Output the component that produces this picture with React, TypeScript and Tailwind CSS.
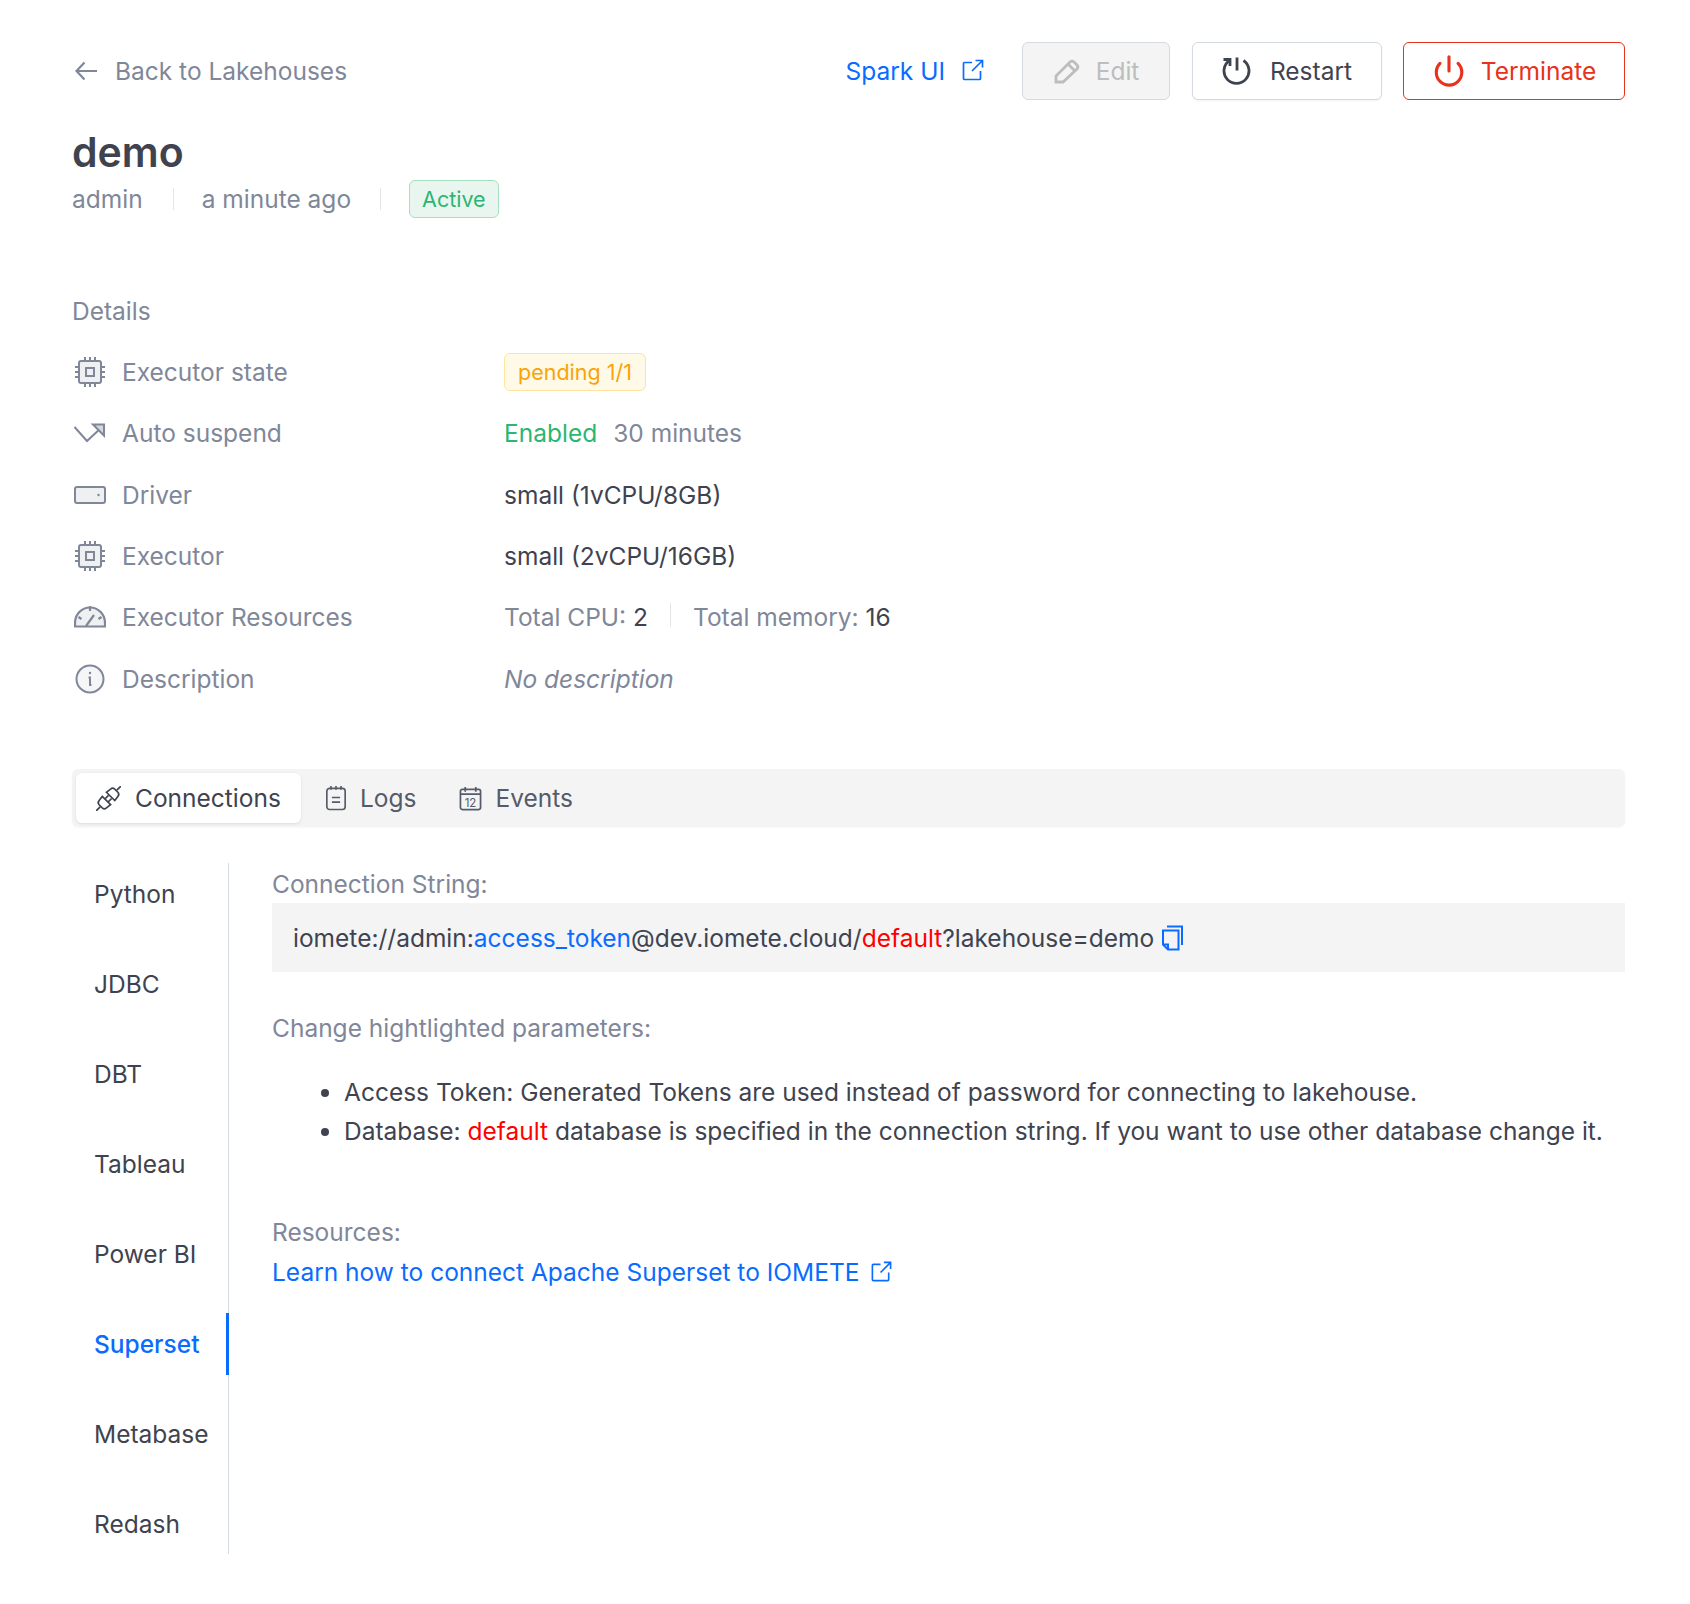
import type { ReactNode } from "react";
import { Power } from "lucide-react";

function BackArrow() {
  return (
    <svg viewBox="0 0 22 20" fill="none" stroke="currentColor" strokeWidth="2.200" className="w-[22px] h-5 ml-[3px] mr-[18px]">
      <path d="M1.500 10H22M9.500 1.500 1.500 10l8 8.500" />
    </svg>
  );
}

function ExternalIcon({ className }: { className?: string }) {
  return (
    <svg viewBox="0 0 24 24" fill="none" stroke="currentColor" strokeWidth="1.700" className={className}>
      <path d="M11 4.500H3.500a1 1 0 0 0-1 1v15a1 1 0 0 0 1 1h15a1 1 0 0 0 1-1V13" />
      <path d="M11 13 21.500 2.500M14.500 2.500h7v7" />
    </svg>
  );
}

function ChipIcon() {
  return (
    <svg viewBox="0 0 32 32" fill="none" stroke="#7f8799" strokeWidth="2" className="w-8 h-8">
      <rect x="5" y="5" width="22" height="22" rx="2" fill="#eef0f2" />
      <rect x="12" y="12" width="8" height="8" />
      <path d="M11 1v4M16 1v4M21 1v4M11 27v4M16 27v4M21 27v4M1 11h4M1 16h4M1 21h4M27 11h4M27 16h4M27 21h4" />
    </svg>
  );
}

function SuspendIcon() {
  return (
    <svg viewBox="0 0 32 20" fill="none" stroke="#7f8799" strokeWidth="2" className="w-8 h-5">
      <path d="M0.500 4 13 18 28 4" />
      <path d="M19 1.500h11v11Z" fill="#d5d8de" />
    </svg>
  );
}

function DriverIcon() {
  return (
    <svg viewBox="0 0 32 18" fill="none" stroke="#7f8799" strokeWidth="2" className="w-8 h-[18px]">
      <rect x="1" y="1" width="30" height="16" rx="2" fill="#eef0f2" />
      <circle cx="24.500" cy="9" r="1.200" fill="#7f8799" stroke="none" />
    </svg>
  );
}

function GaugeIcon() {
  return (
    <svg viewBox="0 0 32 22" fill="none" stroke="#7f8799" strokeWidth="2.200" className="w-8 h-[22px]">
      <path d="M1 20.500v-3.500C1 8.500 7.500 1.500 16 1.500S31 8.500 31 17v3.500Z" fill="#eef0f2" />
      <path d="M12 20 20 9M16 0v5M4.500 11l3 2M27.500 11l-3 2" />
    </svg>
  );
}

function InfoIcon() {
  return (
    <svg viewBox="0 0 30 30" fill="none" stroke="#7f8799" strokeWidth="2" className="w-[30px] h-[30px] ml-px">
      <circle cx="15" cy="15" r="13.500" fill="#f5f6f7" />
      <path d="M13.500 13.500H15V21h1.500" />
      <circle cx="15" cy="9" r="1.200" fill="#7f8799" stroke="none" />
    </svg>
  );
}

function PencilIcon() {
  return (
    <svg viewBox="0 0 28 28" fill="none" stroke="#bdbdbd" strokeWidth="2.800" className="w-7 h-7">
      <path d="M3 25v-6L17 5a3 3 0 0 1 4 0l3 3a3 3 0 0 1 0 4L10 25Z" />
      <path d="m15 7 6.500 6.500" />
    </svg>
  );
}

function RestartIcon() {
  return (
    <svg viewBox="0 0 30 30" fill="none" stroke="#3f4350" strokeWidth="2.800" className="w-[30px] h-[30px]">
      <path d="M15 1.500v13" />
      <path d="M21.500 4.500a12.500 12.500 0 1 1-14 0" />
      <path d="M1.500 3.500h6.500V10" />
    </svg>
  );
}

function PlugIcon() {
  return (
    <svg viewBox="0 0 24 24" fill="none" stroke="#3f4350" strokeWidth="1.600" className="w-[25px] h-[25px]">
      <path d="M0 24l4-4M20 4l4-4" />
      <path d="M6 10l8 8-4 3a3 3 0 0 1-4 0l-3-3a3 3 0 0 1 0-4Z" />
      <path d="M10 6l8 8 3-4a3 3 0 0 0 0-4l-3-3a3 3 0 0 0-4 0Z" />
      <path d="M8.500 12.500 12 9M11.500 15.500 15 12" />
    </svg>
  );
}

function NotepadIcon() {
  return (
    <svg viewBox="0 0 24 28" fill="none" stroke="#555b68" strokeWidth="1.800" className="w-[22px] h-[26px]">
      <rect x="2" y="3.500" width="20" height="23" rx="3" />
      <path d="M6.500 1v4M12 1v4M17.500 1v4M7.500 13.500h9M7.500 18.500h9" />
    </svg>
  );
}

function CalendarIcon() {
  return (
    <svg viewBox="0 0 24 26" fill="none" stroke="#555b68" strokeWidth="1.800" className="w-[23px] h-[25px]">
      <rect x="1.500" y="3.500" width="21" height="21" rx="2" />
      <path d="M1.500 8.500h21M6.500 1v5M17.500 1v5" />
      <text x="12" y="21.500" textAnchor="middle" fontSize="12" fill="#555b68" stroke="none" fontFamily="Inter, sans-serif">
        12
      </text>
    </svg>
  );
}

function CopyIcon() {
  return (
    <svg viewBox="0 0 22 26" fill="none" stroke="#0a6cff" strokeWidth="2" className="w-[22px] h-[26px]">
      <path d="M6 1.500h15V20" />
      <path d="M2 5.500h15.500v19H7l-5-5Z" />
      <path d="M2 19.500h5v5" />
    </svg>
  );
}

function Divider() {
  return <span className="w-px h-[22px] bg-[#e3e5e9]" />;
}

function DetailRow({ icon, label, children }: { icon: ReactNode; label: string; children: ReactNode }) {
  return (
    <div className="flex items-center h-[61.3px]">
      <div className="w-[50px] pl-[2px] flex items-center shrink-0">{icon}</div>
      <div className="w-[382px] text-[#7f8799] shrink-0">{label}</div>
      <div className="flex items-center">{children}</div>
    </div>
  );
}

const sideItems = ["Python", "JDBC", "DBT", "Tableau", "Power BI", "Superset", "Metabase", "Redash"];

export default function App() {
  return (
    <div className="bg-white min-h-[1604px] pl-[72px] pr-[65px] pt-[42px] text-[24.500px] leading-[36px] text-[#3f4350] font-['Inter',sans-serif]">
      <div className="flex items-center justify-between h-[58px]">
        <div className="flex items-center text-[#7f8799]">
          <BackArrow />
          Back to Lakehouses
        </div>
        <div className="flex items-center">
          <div className="flex items-center text-[#0a6cff] mr-[37px]">
            Spark UI
            <ExternalIcon className="w-[24px] h-[24px] ml-[16px] mb-0.5" />
          </div>
          <button className="flex items-center justify-center w-[148px] h-[58px] rounded-md border border-[#d5d9e0] bg-[#f4f4f5] text-[#bdbdbd] gap-[15px]">
            <PencilIcon />
            Edit
          </button>
          <button className="flex items-center justify-center w-[190px] h-[58px] ml-[22px] rounded-md border border-[#d5d9e0] bg-white gap-[18px] shadow-[0_1px_2px_rgba(0,0,0,0.05)]">
            <RestartIcon />
            Restart
          </button>
          <button className="flex items-center justify-center w-[222px] h-[58px] ml-[21px] rounded-md border border-[#e8321c] bg-white text-[#e8321c] gap-[15px]">
            <Power className="w-[34px] h-[34px]" strokeWidth={2.2} />
            Terminate
          </button>
        </div>
      </div>

      <h1 className="mt-[27px] text-[41px] leading-[50px] font-semibold text-[#3f4350]">demo</h1>
      <div className="flex items-center h-[38px] mt-[3px] text-[#7f8799]">
        <span className="mr-[30px]">admin</span>
        <Divider />
        <span className="ml-[28px] mr-[29px]">a minute ago</span>
        <Divider />
        <span className="ml-[28px] h-[38px] px-[12px] flex items-center rounded-md border border-[#a6e0c0] bg-[#e9f6ef] text-[#2bb673] text-[21.500px]">
          Active
        </span>
      </div>

      <div className="mt-[75px] text-[#7f8799]">Details</div>
      <div className="mt-[12.500px]">
        <DetailRow icon={<ChipIcon />} label="Executor state">
          <span className="h-[38px] px-[13px] flex items-center rounded-md border border-[#fde5a0] bg-[#fff9e8] text-[#faa307] text-[21.500px]">
            pending 1/1
          </span>
        </DetailRow>
        <DetailRow icon={<SuspendIcon />} label="Auto suspend">
          <span className="text-[#2bb673]">Enabled</span>
          <span className="ml-[16px] text-[#7f8799]">30 minutes</span>
        </DetailRow>
        <DetailRow icon={<DriverIcon />} label="Driver">
          small (1vCPU/8GB)
        </DetailRow>
        <DetailRow icon={<ChipIcon />} label="Executor">
          small (2vCPU/16GB)
        </DetailRow>
        <DetailRow icon={<GaugeIcon />} label="Executor Resources">
          <span className="text-[#7f8799]">
            Total CPU: <span className="text-[#3f4350]">2</span>
          </span>
          <span className="w-px h-[24px] bg-[#e3e5e9] mx-[22px] mb-1" />
          <span className="text-[#7f8799]">
            Total memory: <span className="text-[#3f4350]">16</span>
          </span>
        </DetailRow>
        <DetailRow icon={<InfoIcon />} label="Description">
          <span className="italic text-[#7f8799]">No description</span>
        </DetailRow>
      </div>

      <div className="mt-[60px] h-[58px] rounded-md bg-[#f4f4f5] flex items-center pl-1 shadow-[0_1px_2px_rgba(0,0,0,0.03)]">
        <div className="flex items-center h-[50px] w-[225px] rounded-md bg-white pl-5 gap-[14px] shadow-[0_1px_3px_rgba(0,0,0,0.1)]">
          <PlugIcon />
          Connections
        </div>
        <div className="flex items-center ml-[24px] gap-[13px] text-[#555b68]">
          <NotepadIcon />
          Logs
        </div>
        <div className="flex items-center ml-[42px] gap-[14px] text-[#555b68]">
          <CalendarIcon />
          Events
        </div>
      </div>

      <div className="flex mt-[36px]">
        <div className="w-[157px] h-[691px] shrink-0 border-r border-[#d5d9e0] flex flex-col gap-[28px]">
          {sideItems.map((item) => (
            <div
              key={item}
              className={
                item === "Superset"
                  ? "h-[62px] shrink-0 flex items-center pl-[22px] text-[#0a6cff] font-medium border-r-[3px] border-[#0a6cff] -mr-px"
                  : "h-[62px] shrink-0 flex items-center pl-[22px]"
              }
            >
              {item}
            </div>
          ))}
        </div>

        <div className="flex-1 pl-[43px]">
          <div className="text-[#7f8799] mt-[3px]">Connection String:</div>
          <div className="mt-[1px] h-[69px] bg-[#f4f4f5] flex items-center pl-[21px]">
            iomete://admin:<span className="text-[#0a6cff]">access_token</span>@dev.iomete.cloud/
            <span className="text-[#ff0000]">default</span>?lakehouse=demo
            <span className="ml-[7px]">
              <CopyIcon />
            </span>
          </div>
          <div className="mt-[38px] text-[#7f8799]">Change hightlighted parameters:</div>
          <ul className="mt-[27px] pl-[72px] list-disc leading-[39px]">
            <li>Access Token: Generated Tokens are used instead of password for connecting to lakehouse.</li>
            <li>
              Database: <span className="text-[#ff0000]">default</span> database is specified in the connection string. If you want to use other database change it.
            </li>
          </ul>
          <div className="mt-[63px] text-[#7f8799]">Resources:</div>
          <div className="mt-[4px] flex items-center text-[#0a6cff]">
            Learn how to connect Apache Superset to IOMETE
            <ExternalIcon className="w-[23px] h-[23px] ml-[11px] mb-0.5" />
          </div>
        </div>
      </div>
    </div>
  );
}
